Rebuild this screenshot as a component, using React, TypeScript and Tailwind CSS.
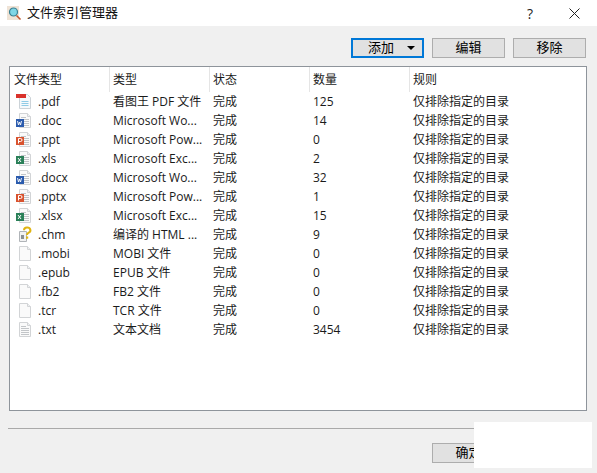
const font = { fontFamily: '"Open Sans","Noto Sans CJK SC",sans-serif' };

type Kind = "pdf" | "word" | "ppt" | "xls" | "chm" | "blank" | "txt";

const Sheet = ({ lines = false }: { lines?: boolean }) => (
  <>
    <path d="M3.5 1.5h8l3 3v11h-11z" fill="#fafafa" stroke="#d2d4d6" />
    <path d="M11.5 1.5v3h3" fill="#eef0f1" stroke="#d2d4d6" />
    {lines && <path d="M5 5.5h5M5 7.5h8M5 9.5h8M5 11.5h8M5 13.5h8" stroke="#c2c5c8" />}
  </>
);

function Icon({ kind }: { kind: Kind }) {
  return (
    <svg width="17" height="17" viewBox="0 0 17 17" className="shrink-0">
      {kind === "pdf" && (
        <>
          <path d="M3.5 1.5h8l3 3v11h-11z" fill="#f6f9fb" stroke="#ccd3d8" />
          <rect x="0" y="1" width="10" height="4" fill="#d9322b" />
          <path d="M5.5 8.5h7M5.5 10.5h7M5.5 12.5h7" stroke="#8fcbe6" />
        </>
      )}
      {kind === "word" && (
        <>
          <Sheet lines />
          <rect x="0" y="7" width="8" height="8" fill="#2b5bad" />
          <path d="M1.5 9l1 4 1-3 1 3 1-4" stroke="#fff" fill="none" strokeWidth="0.9" />
        </>
      )}
      {kind === "ppt" && (
        <>
          <Sheet lines />
          <rect x="0" y="6" width="8" height="8" fill="#d9532f" />
          <path d="M2.5 12.5v-5h2a1.4 1.4 0 0 1 0 3h-2" stroke="#fff" fill="none" />
        </>
      )}
      {kind === "xls" && (
        <>
          <Sheet lines />
          <rect x="0" y="6" width="8" height="8" fill="#2a8058" />
          <path d="M2 8l3 4M5 8l-3 4" stroke="#fff" />
        </>
      )}
      {kind === "chm" && (
        <>
          <path d="M3.5 5.5h7v10h-7z" fill="#f2f2f2" stroke="#b0b4b8" />
          <rect x="5" y="9" width="3" height="4" fill="#8a8f94" />
          <path d="M8 4.2a3.2 2.7 0 1 1 4.4 2.6c-1 .6-1.4 1-1.4 2.2" fill="none" stroke="#e0b412" strokeWidth="2" />
          <rect x="10" y="10.5" width="2.2" height="2.2" fill="#e0b412" />
        </>
      )}
      {kind === "blank" && <Sheet />}
      {kind === "txt" && <Sheet lines />}
    </svg>
  );
}

const rows: [Kind, string, string, string][] = [
  ["pdf", ".pdf", "看图王 PDF 文件", "125"],
  ["word", ".doc", "Microsoft Wo...", "14"],
  ["ppt", ".ppt", "Microsoft Pow...", "0"],
  ["xls", ".xls", "Microsoft Exc...", "2"],
  ["word", ".docx", "Microsoft Wo...", "32"],
  ["ppt", ".pptx", "Microsoft Pow...", "1"],
  ["xls", ".xlsx", "Microsoft Exc...", "15"],
  ["chm", ".chm", "编译的 HTML ...", "9"],
  ["blank", ".mobi", "MOBI 文件", "0"],
  ["blank", ".epub", "EPUB 文件", "0"],
  ["blank", ".fb2", "FB2 文件", "0"],
  ["blank", ".tcr", "TCR 文件", "0"],
  ["txt", ".txt", "文本文档", "3454"],
];

const grid = "grid grid-cols-[100px_100px_100px_100px_1fr]";
const btn = "w-[73px] h-[20px] flex items-center justify-center bg-[#e1e1e1] border border-[#adadad] text-[13px] text-black";

export default function App() {
  return (
    <div className="relative w-[597px] h-[473px] overflow-hidden bg-[#f0f0f0] text-[12px] text-[#1a1a1a]" style={font}>
      <div className="h-[26px] bg-white flex items-center pl-[7px]">
        <svg width="15" height="16" viewBox="0 0 15 16" className="shrink-0">
          <rect x="0" y="1" width="12" height="14" fill="#efe3d6" />
          <circle cx="6.5" cy="7" r="4" fill="#7fd6e6" stroke="#3a7f92" strokeWidth="1.2" />
          <path d="M9.5 10.5l4 4" stroke="#c2552e" strokeWidth="1.6" />
        </svg>
        <span className="ml-[5px] text-[13px] text-[#111]">文件索引管理器</span>
        <div className="ml-auto flex items-center">
          <span className="text-[14px] text-[#222] mr-[36px]">?</span>
          <svg width="11" height="11" viewBox="0 0 11 11" className="mr-[17px]">
            <path d="M.5.5l10 10M10.5.5l-10 10" stroke="#222" />
          </svg>
        </div>
      </div>

      <div className="flex gap-[8px] pt-[12px] pl-[351px]">
        <div className="relative w-[73px] h-[20px] flex items-center justify-center bg-[#e1e1e1] border-2 border-[#0078d7] text-[13px] text-black">
          <span className="mr-[13px]">添加</span>
          <span className="absolute right-[7px] top-[6px] w-0 h-0 border-x-[4px] border-x-transparent border-t-[4px] border-t-black" />
        </div>
        <div className={btn}>编辑</div>
        <div className={btn}>移除</div>
      </div>

      <div className="mt-[8px] ml-[9px] w-[578px] h-[345px] bg-white border border-[#8e949b]">
        <div className={`${grid} h-[25px] items-center`}>
          {["文件类型", "类型", "状态", "数量", "规则"].map((h, i) => (
            <div key={h} className={`h-full flex items-center ${i === 0 ? "pl-[4px]" : "pl-[3px]"} ${i < 4 ? "border-r border-[#e5e5e5]" : ""}`}>
              {h}
            </div>
          ))}
        </div>
        {rows.map(([kind, ext, type, count]) => (
          <div key={ext} className={`${grid} h-[19px] items-center whitespace-nowrap`}>
            <div className="flex items-center pl-[6px]">
              <Icon kind={kind} />
              <span className="ml-[5px]">{ext}</span>
            </div>
            <div className="pl-[3px]">{type}</div>
            <div className="pl-[3px]">完成</div>
            <div className="pl-[3px]">{count}</div>
            <div className="pl-[3px]">仅排除指定的目录</div>
          </div>
        ))}
      </div>

      <div className="mt-[17px] ml-[8px] w-[579px] h-[1px] bg-[#a9a9a9]" />

      <div className="mt-[14px] ml-[432px]">
        <div className={btn}>确定</div>
      </div>

      <div className="absolute left-[474px] top-[422px] w-[118px] h-[46px] bg-white" />
    </div>
  );
}
